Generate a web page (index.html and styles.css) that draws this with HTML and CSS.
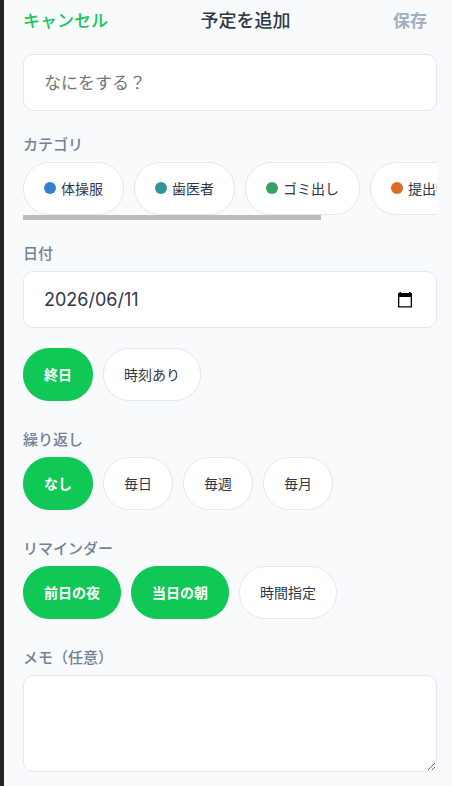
FILE: index.html
```html
<!DOCTYPE html>
<html lang="ja">
<head>
  <meta charset="UTF-8" />
  <meta name="viewport" content="width=device-width, initial-scale=1.0"/>
  <title>予定を追加</title>
  <link rel="stylesheet" href="styles.css">
</head>
<body>

<form class="sheet">

  <header class="sheet-header">
    <button type="button" class="btn-cancel">キャンセル</button>
    <h1>予定を追加</h1>
    <button type="submit" class="btn-save" disabled>保存</button>
  </header>

  <div class="group">
    <input type="text" id="title" class="field" placeholder="なにをする？" aria-label="なにをする？"/>
  </div>

  <div class="group" role="group" aria-labelledby="categoryLabel">
    <div class="label" id="categoryLabel">カテゴリ</div>
    <div class="chips chips-scroll" id="categories">
      <button type="button" class="chip"><span class="dot dot-blue"></span>体操服</button>
      <button type="button" class="chip"><span class="dot dot-teal"></span>歯医者</button>
      <button type="button" class="chip"><span class="dot dot-green"></span>ゴミ出し</button>
      <button type="button" class="chip"><span class="dot dot-orange"></span>提出物</button>
    </div>
    <div class="scrollbar"><div class="scrollbar-thumb"></div></div>
  </div>

  <div class="group">
    <label class="label" for="date">日付</label>
    <div class="field date-field">
      <input type="text" id="date" inputmode="numeric" value="2026/06/11"/>
      <button type="button" class="btn-calendar" aria-label="カレンダー">
        <svg width="16" height="18" viewBox="0 0 16 18">
          <path d="M2.500 1h1.500v1h8v-1h1.500v1h1q.5 0 .5.5v13.500q0 .5-.5.5h-13q-.5 0-.5-.5v-13.500q0-.5.5-.5h1zM2.300 6v9.200h11.400v-9.200z" fill="#000" fill-rule="evenodd"/>
        </svg>
      </button>
    </div>
    <div class="chips time-chips">
      <button type="button" class="chip selected" aria-pressed="true">終日</button>
      <button type="button" class="chip" aria-pressed="false">時刻あり</button>
    </div>
  </div>

  <div class="group" role="group" aria-labelledby="repeatLabel">
    <div class="label" id="repeatLabel">繰り返し</div>
    <div class="chips">
      <button type="button" class="chip selected" aria-pressed="true">なし</button>
      <button type="button" class="chip" aria-pressed="false">毎日</button>
      <button type="button" class="chip" aria-pressed="false">毎週</button>
      <button type="button" class="chip" aria-pressed="false">毎月</button>
    </div>
  </div>

  <div class="group" role="group" aria-labelledby="reminderLabel">
    <div class="label" id="reminderLabel">リマインダー</div>
    <div class="chips">
      <button type="button" class="chip selected" aria-pressed="true">前日の夜</button>
      <button type="button" class="chip selected" aria-pressed="true">当日の朝</button>
      <button type="button" class="chip" aria-pressed="false">時間指定</button>
    </div>
  </div>

  <div class="group">
    <label class="label" for="memo">メモ（任意）</label>
    <textarea id="memo" class="field memo"></textarea>
  </div>

</form>

</body>
</html>
```
FILE: styles.css
```css
:root {
  --bg: #f8fafc;
  --card: #fff;
  --primary: #10c855;
  --text: #2d3748;
  --muted: #718096;
  --disabled: #a0aec0;
  --border: #e2e8f0;
}
* {
  box-sizing: border-box;
}
body {
  margin: 0;
  min-height: 100vh;
  border-left: 4px solid #262422;
  background: var(--bg);
  color: var(--text);
  font-family: Inter, 'Noto Sans CJK JP', sans-serif;
}
button, input, textarea {
  font-family: inherit;
  color: inherit;
}
button {
  cursor: pointer;
}
.sheet {
  display: flex;
  flex-direction: column;
  gap: 22px;
  padding: 0 15px 15px 19px;
}
.sheet-header {
  display: flex;
  align-items: center;
  justify-content: space-between;
  height: 38px;
  margin-bottom: -6px;
  padding-right: 10px;
}
h1 {
  margin: 0;
  font-size: 18px;
  font-weight: 500;
}
.btn-cancel, .btn-save {
  min-width: 44px;
  padding: 0;
  border: none;
  background: none;
  font-size: 17px;
}
.btn-cancel {
  color: var(--primary);
  font-weight: 500;
  text-align: left;
}
.btn-save {
  color: var(--disabled);
  font-weight: 700;
  text-align: right;
}
.label {
  display: block;
  margin-bottom: 6px;
  padding-top: 1px;
  font-size: 15px;
  line-height: 22px;
  font-weight: 500;
  color: var(--muted);
}
.field {
  display: block;
  width: 100%;
  height: 57px;
  padding: 0 20px;
  border: 1px solid var(--border);
  border-radius: 10px;
  background: var(--card);
  font-size: 17px;
}
.field::placeholder {
  color: #757575;
}
.date-field {
  display: flex;
  align-items: center;
}
.date-field input {
  flex: 1;
  min-width: 0;
  padding: 0;
  border: none;
  background: none;
  font-size: 18px;
}
.btn-calendar {
  display: flex;
  padding: 0 3px;
  border: none;
  background: none;
}
.memo {
  height: 97px;
  padding: 16px 20px;
}
.chips {
  display: flex;
  gap: 10px;
  padding-bottom: 5px;
}
.chips-scroll {
  padding-bottom: 0;
  overflow-x: auto;
  scrollbar-width: none;
}
.time-chips {
  margin-top: 20px;
}
.chip {
  display: flex;
  flex-shrink: 0;
  align-items: center;
  gap: 5px;
  height: 53px;
  padding: 0 20px 2px;
  border: 1px solid var(--border);
  border-radius: 26px;
  background: var(--card);
  font-size: 14px;
  font-weight: 400;
}
.chip.selected {
  border-color: var(--primary);
  background: var(--primary);
  color: #fff;
  font-weight: 700;
}
.dot {
  width: 12px;
  height: 12px;
  border-radius: 50%;
}
.dot-blue { background: #3182ce; }
.dot-teal { background: #319795; }
.dot-green { background: #38a169; }
.dot-orange { background: #dd6b20; }
.scrollbar {
  height: 5px;
}
.scrollbar-thumb {
  width: 72%;
  height: 100%;
  background: #babcbe;
}
```
